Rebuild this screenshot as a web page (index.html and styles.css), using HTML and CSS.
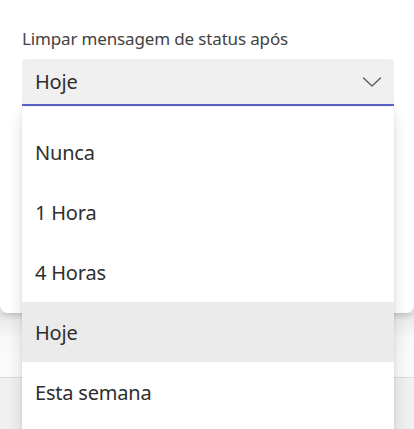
FILE: index.html
```html
<!DOCTYPE html>
<html lang="pt">
<head>
<meta charset="utf-8">
<link rel="stylesheet" href="styles.css">
</head>
<body>
<div class="page">
  <section class="dialog">
    <div class="field-wrap">
      <label class="label">Limpar mensagem de status após</label>
      <div class="select">
        <span class="value">Hoje</span>
        <svg class="chevron" width="20" height="12" viewBox="0 0 20 12"><path d="M1.5 2 L10 10 L18.5 2" fill="none" stroke="#616161" stroke-width="1.5" stroke-linecap="round" stroke-linejoin="round"/></svg>
      </div>
      <ul class="listbox">
        <li class="option">Nunca</li>
        <li class="option">1 Hora</li>
        <li class="option">4 Horas</li>
        <li class="option selected">Hoje</li>
        <li class="option">Esta semana</li>
      </ul>
    </div>
  </section>
  <div class="band"></div>
  <div class="rest"></div>
</div>
</body>
</html>
```
FILE: styles.css
```css
html, body {
  margin: 0;
  padding: 0;
}
body {
  background: #f0f0f0;
  font-family: "Noto Sans", "Open Sans", sans-serif;
  color: #242424;
  overflow: hidden;
}
.page {
  width: 414px;
  height: 429px;
  overflow: hidden;
  position: relative;
}
.dialog {
  background: #ffffff;
  height: 313px;
  border-radius: 0 0 8px 8px;
  box-shadow: 0 2px 6px rgba(0,0,0,0.18);
  padding: 27px 20px 0 22px;
  box-sizing: border-box;
  position: relative;
  z-index: 2;
}
.band {
  height: 64px;
  background: linear-gradient(#e6e6e6, #f9f9f9 40%, #fafafa);
  border-bottom: 1px solid #dcdcdc;
}
.rest {
  height: 60px;
  background: #f0f0f0;
}
.field-wrap {
  position: relative;
}
.label {
  display: block;
  font-size: 17px;
  line-height: 24px;
  height: 24px;
  color: #424242;
  margin-bottom: 8px;
  letter-spacing: -0.15px;
}
.select {
  height: 45px;
  background: #f0f0f0;
  border-radius: 4px 4px 0 0;
  border-bottom: 2px solid #5b5fc7;
  display: flex;
  align-items: center;
  justify-content: space-between;
  padding: 0 12px 0 13px;
}
.value {
  font-size: 20px;
  line-height: 28px;
  color: #2e2e2e;
  letter-spacing: -0.2px;
}
.chevron {
  display: block;
}
.listbox {
  position: absolute;
  left: 0;
  right: 0;
  top: 80px;
  margin: 0;
  padding: 15px 0 40px 0;
  list-style: none;
  background: #ffffff;
  border-radius: 4px;
  box-shadow: 0 8px 16px rgba(0,0,0,0.14), 0 0 2px rgba(0,0,0,0.12);
  z-index: 5;
}
.option {
  height: 60px;
  line-height: 62px;
  padding-left: 13px;
  font-size: 20px;
  color: #2e2e2e;
  letter-spacing: -0.2px;
}
.option.selected {
  background: #ebebeb;
}
```
